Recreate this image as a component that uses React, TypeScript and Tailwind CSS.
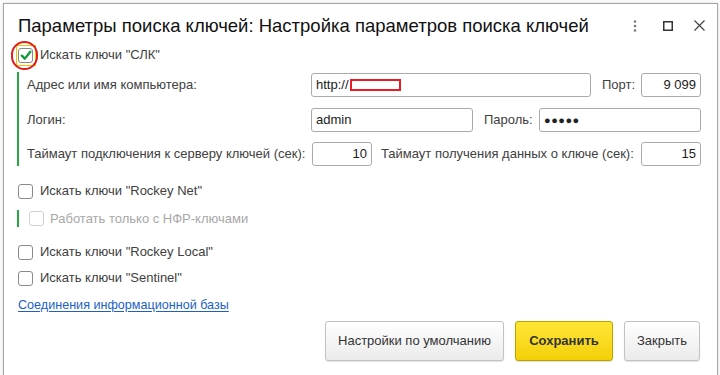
import React from 'react';

const font = { fontFamily: '"Liberation Sans", Arial, sans-serif' };

const CheckBox: React.FC<{ checked?: boolean; disabled?: boolean; focused?: boolean }> = ({ checked, disabled, focused }) => (
  <span className="relative flex h-[15px] w-[15px] shrink-0">
    {focused && (
      <span className="absolute -left-[2px] -top-[3px] h-[21px] w-[20px] border border-[#f5c400]" />
    )}
    <span
      className={`relative flex h-[15px] w-[15px] items-center justify-center rounded-[3px] border bg-white ${
        disabled ? 'border-[#d0d0d0]' : 'border-[#8a8a8a]'
      }`}
    >
      {checked && (
        <svg width="12" height="11" viewBox="0 0 13 12">
          <path d="M2 6.2 L5.2 9.4 L11.2 1.8" fill="none" stroke="#119b3b" strokeWidth="2.6" strokeLinecap="round" strokeLinejoin="round" />
        </svg>
      )}
    </span>
    {focused && (
      <span className="absolute -left-[7px] -top-[7px] h-[29px] w-[27px] rounded-full border-2 border-[#e21b1b]" />
    )}
  </span>
);

const Field: React.FC<{ w: string; value?: string; right?: boolean; children?: React.ReactNode }> = ({ w, value, right, children }) => (
  <div
    className={`relative flex h-[24px] ${w} shrink-0 items-center rounded-[3px] border border-[#aaaaaa] bg-white px-[4px] text-[13px] text-[#1a1a1a] ${
      right ? 'justify-end' : ''
    }`}
  >
    {value}
    {children}
  </div>
);

export default function App() {
  return (
    <div className="h-[375px] w-[720px] overflow-hidden bg-white" style={font}>
      <div className="h-[3px] w-full bg-white" />
      <div className="ml-[3px] h-[380px] w-[715px] border border-[#a6a6a6] bg-white shadow-[0_0_4px_rgba(0,0,0,0.15)]">
        {/* title bar */}
        <div className="flex h-[41px] items-center pl-[14px] pr-[12px] pt-[2px]">
          <div className="text-[18.5px] text-[#111111]">
            Параметры поиска ключей: Настройка параметров поиска ключей
          </div>
          <div className="ml-auto flex items-center">
            <svg width="4" height="12" viewBox="0 0 4 12" className="mr-[26px]">
              <circle cx="2" cy="1.5" r="1.3" fill="#7a7a7a" />
              <circle cx="2" cy="6" r="1.3" fill="#7a7a7a" />
              <circle cx="2" cy="10.5" r="1.3" fill="#7a7a7a" />
            </svg>
            <svg width="10" height="10" viewBox="0 0 10 10" className="mr-[21px]">
              <rect x="0.75" y="0.75" width="8.5" height="8.5" fill="none" stroke="#333" strokeWidth="1.5" />
            </svg>
            <svg width="11" height="11" viewBox="0 0 11 11">
              <path d="M0.5 0.5 L10.5 10.5 M10.5 0.5 L0.5 10.5" stroke="#444" strokeWidth="1.2" />
            </svg>
          </div>
        </div>

        <div className="pl-[13px] pr-[16px] text-[13px] text-[#404040]">
          <label className="flex h-[20px] items-center">
            <span className="ml-[1px] flex">
              <CheckBox checked focused />
            </span>
            <span className="ml-[7px]">Искать ключи "СЛК"</span>
          </label>

          <div className="mt-[7px] flex flex-col border-l-2 border-[#27a844] pl-[8px] pt-[1px]">
            <div className="flex h-[24px] items-center">
              <span className="w-[284px] shrink-0">Адрес или имя компьютера:</span>
              <Field w="w-[280px]" value="http://">
                <span className="ml-[1px] h-[12px] w-[51px] border-2 border-[#e81c24]" />
              </Field>
              <span className="ml-[11px]">Порт:</span>
              <span className="ml-auto flex">
                <Field w="w-[60px]" value="9 099" right />
              </span>
            </div>
            <div className="mt-[11px] flex h-[24px] items-center">
              <span className="w-[284px] shrink-0">Логин:</span>
              <Field w="w-[162px]" value="admin" />
              <span className="ml-[11px]">Пароль:</span>
              <span className="ml-auto flex">
                <Field w="w-[162px]">
                  <span className="text-[11px] tracking-[0.5px] text-[#222]">●●●●●</span>
                </Field>
              </span>
            </div>
            <div className="mt-[10px] flex h-[24px] items-center">
              <span className="w-[285px] shrink-0">Таймаут подключения к серверу ключей (сек):</span>
              <Field w="w-[60px]" value="10" right />
              <span className="ml-[9px]">Таймаут получения данных о ключе (сек):</span>
              <span className="ml-auto flex">
                <Field w="w-[60px]" value="15" right />
              </span>
            </div>
          </div>

          <label className="mt-[15px] flex h-[20px] items-center">
            <span className="ml-[1px] flex">
              <CheckBox />
            </span>
            <span className="ml-[7px]">Искать ключи "Rockey Net"</span>
          </label>

          <div className="mt-[9px] flex h-[17px] items-center border-l-2 border-[#27a844] pl-[10px]">
            <CheckBox disabled />
            <span className="ml-[6px] text-[#a8a8a8]">Работать только с НФР-ключами</span>
          </div>

          <label className="mt-[15px] flex h-[20px] items-center">
            <span className="ml-[1px] flex">
              <CheckBox />
            </span>
            <span className="ml-[7px]">Искать ключи "Rockey Local"</span>
          </label>

          <label className="mt-[6px] flex h-[20px] items-center">
            <span className="ml-[1px] flex">
              <CheckBox />
            </span>
            <span className="ml-[7px]">Искать ключи "Sentinel"</span>
          </label>

          <div className="mt-[7px] flex h-[20px] items-center">
            <a href="#" className="ml-[1px] text-[12.6px] text-[#1b5fc7] underline underline-offset-2">
              Соединения информационной базы
            </a>
          </div>

          <div className="mt-[6px] flex justify-end gap-[11px] pr-[1px]">
            <button className="h-[40px] w-[179px] rounded-[3px] border border-[#c2c2c2] bg-gradient-to-b from-white to-[#ebebeb] text-[13px] text-[#333] shadow-[0_1px_1px_rgba(0,0,0,0.12)]">
              Настройки по умолчанию
            </button>
            <button className="h-[40px] w-[98px] rounded-[3px] border border-[#b9a100] bg-gradient-to-b from-[#ffe633] to-[#f2d000] text-[13px] font-bold text-[#333] shadow-[0_1px_1px_rgba(0,0,0,0.12)]">
              Сохранить
            </button>
            <button className="h-[40px] w-[76px] rounded-[3px] border border-[#c2c2c2] bg-gradient-to-b from-white to-[#ebebeb] text-[13px] text-[#333] shadow-[0_1px_1px_rgba(0,0,0,0.12)]">
              Закрыть
            </button>
          </div>
        </div>
      </div>
    </div>
  );
}
